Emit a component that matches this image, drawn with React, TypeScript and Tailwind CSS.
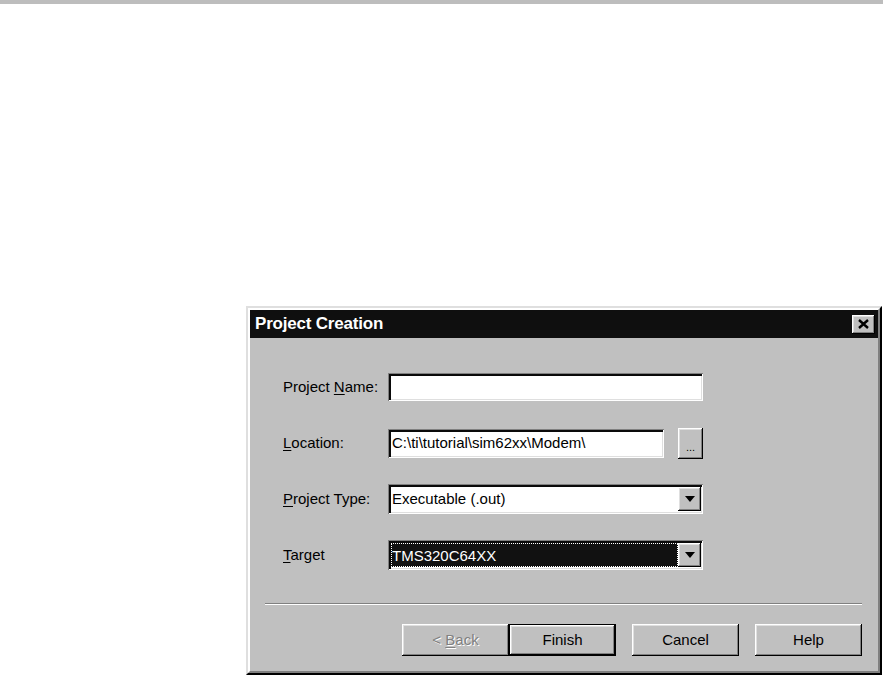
import React from 'react';

const raised =
  'shadow-[inset_-1px_-1px_#000,inset_1px_1px_#fff,inset_-2px_-2px_#808080,inset_2px_2px_#dfdfdf]';
const sunken =
  'shadow-[inset_1px_1px_#808080,inset_-1px_-1px_#fff,inset_3px_3px_#0a0a0a,inset_-2px_-2px_#dfdfdf]';

function Label({ text, u }: { text: string; u: number }) {
  return (
    <div className="w-[105px] shrink-0 text-[15px] text-black">
      {text.slice(0, u)}
      <span className="underline underline-offset-2">{text[u]}</span>
      {text.slice(u + 1)}
    </div>
  );
}

function DropArrow() {
  return (
    <div className={`w-[23px] h-[24px] bg-[#c0c0c0] flex items-center justify-center ${raised}`}>
      <svg width="10" height="6" viewBox="0 0 10 6">
        <path d="M0 0H10L5 6Z" fill="#000" />
      </svg>
    </div>
  );
}

function Combo({ value, selected }: { value: string; selected?: boolean }) {
  return (
    <div className={`w-[315px] h-[30px] bg-white flex items-center pl-[3px] pr-[2px] ${sunken}`}>
      <div className="flex-1 h-full flex items-center py-[3px]">
        {selected ? (
          <div className="w-full h-full bg-[#111] outline-1 outline-dotted outline-white -outline-offset-1 text-white text-[15px] leading-none flex items-center pl-[1px]">
            {value}
          </div>
        ) : (
          <div className="text-[15px] text-black pl-[1px]">{value}</div>
        )}
      </div>
      <DropArrow />
    </div>
  );
}

function Button({ children, primary }: { children: React.ReactNode; primary?: boolean }) {
  return (
    <div
      className={`w-[107px] h-[32px] bg-[#c0c0c0] flex items-center justify-center text-[15px] text-black ${
        primary ? 'border border-black' : ''
      } ${raised}`}
    >
      {children}
    </div>
  );
}

export default function App() {
  return (
    <div
      className="w-[883px] h-[675px] bg-white overflow-hidden"
      style={{ fontFamily: '"Liberation Sans", Arial, sans-serif' }}
    >
      <div className="h-[4px] bg-[#bdbdbd]" />

      {/* Dialog window */}
      <div className="ml-[246px] mt-[302px] w-[636px] h-[369px] border-2 border-t-[#dfdfdf] border-l-[#dfdfdf] border-r-black border-b-black">
        <div className="h-full border-2 border-t-white border-l-white border-r-[#808080] border-b-[#808080] bg-[#c0c0c0] flex flex-col">
          {/* Title bar */}
          <div className="h-[28px] bg-[#0f0f0f] flex items-center justify-between pl-[5px] pr-[3px]">
            <span className="text-white font-bold text-[17px] tracking-[-0.2px]">Project Creation</span>
            <div className={`w-[23px] h-[19px] bg-[#c0c0c0] flex items-center justify-center ${raised}`}>
              <svg width="11" height="10" viewBox="0 0 11 10">
                <path d="M1 1L10 9M10 1L1 9" stroke="#000" strokeWidth="2.4" />
              </svg>
            </div>
          </div>

          {/* Fields */}
          <div className="pl-[33px] pt-[34px] flex flex-col gap-[26px]">
            <div className="h-[30px] flex items-center">
              <Label text="Project Name:" u={8} />
              <div className={`w-[315px] h-[28px] bg-white ${sunken}`} />
            </div>

            <div className="h-[30px] flex items-center">
              <Label text="Location:" u={0} />
              <div className={`w-[276px] h-[29px] bg-white flex items-center pl-[4px] text-[15px] text-black ${sunken}`}>
                C:\ti\tutorial\sim62xx\Modem\
              </div>
              <div className={`ml-[14px] w-[25px] h-[31px] bg-[#c0c0c0] flex items-end justify-center pb-[6px] text-[11px] leading-none text-black ${raised}`}>
                ...
              </div>
            </div>

            <div className="h-[30px] flex items-center">
              <Label text="Project Type:" u={0} />
              <Combo value="Executable (.out)" />
            </div>

            <div className="h-[30px] flex items-center">
              <Label text="Target" u={0} />
              <Combo value="TMS320C64XX" selected />
            </div>
          </div>

          {/* Separator */}
          <div className="mt-[33px] ml-[15px] mr-[16px] h-[2px] border-t border-t-[#808080] border-b border-b-white" />

          {/* Buttons */}
          <div className="mt-[19px] pr-[16px] flex justify-end">
            <Button>
              <span className="text-[#808080] [text-shadow:1px_1px_0_#fff]">
                &lt; <span className="underline underline-offset-2">B</span>ack
              </span>
            </Button>
            <Button primary>Finish</Button>
            <div className="ml-[16px]">
              <Button>Cancel</Button>
            </div>
            <div className="ml-[16px]">
              <Button>Help</Button>
            </div>
          </div>
        </div>
      </div>
    </div>
  );
}
